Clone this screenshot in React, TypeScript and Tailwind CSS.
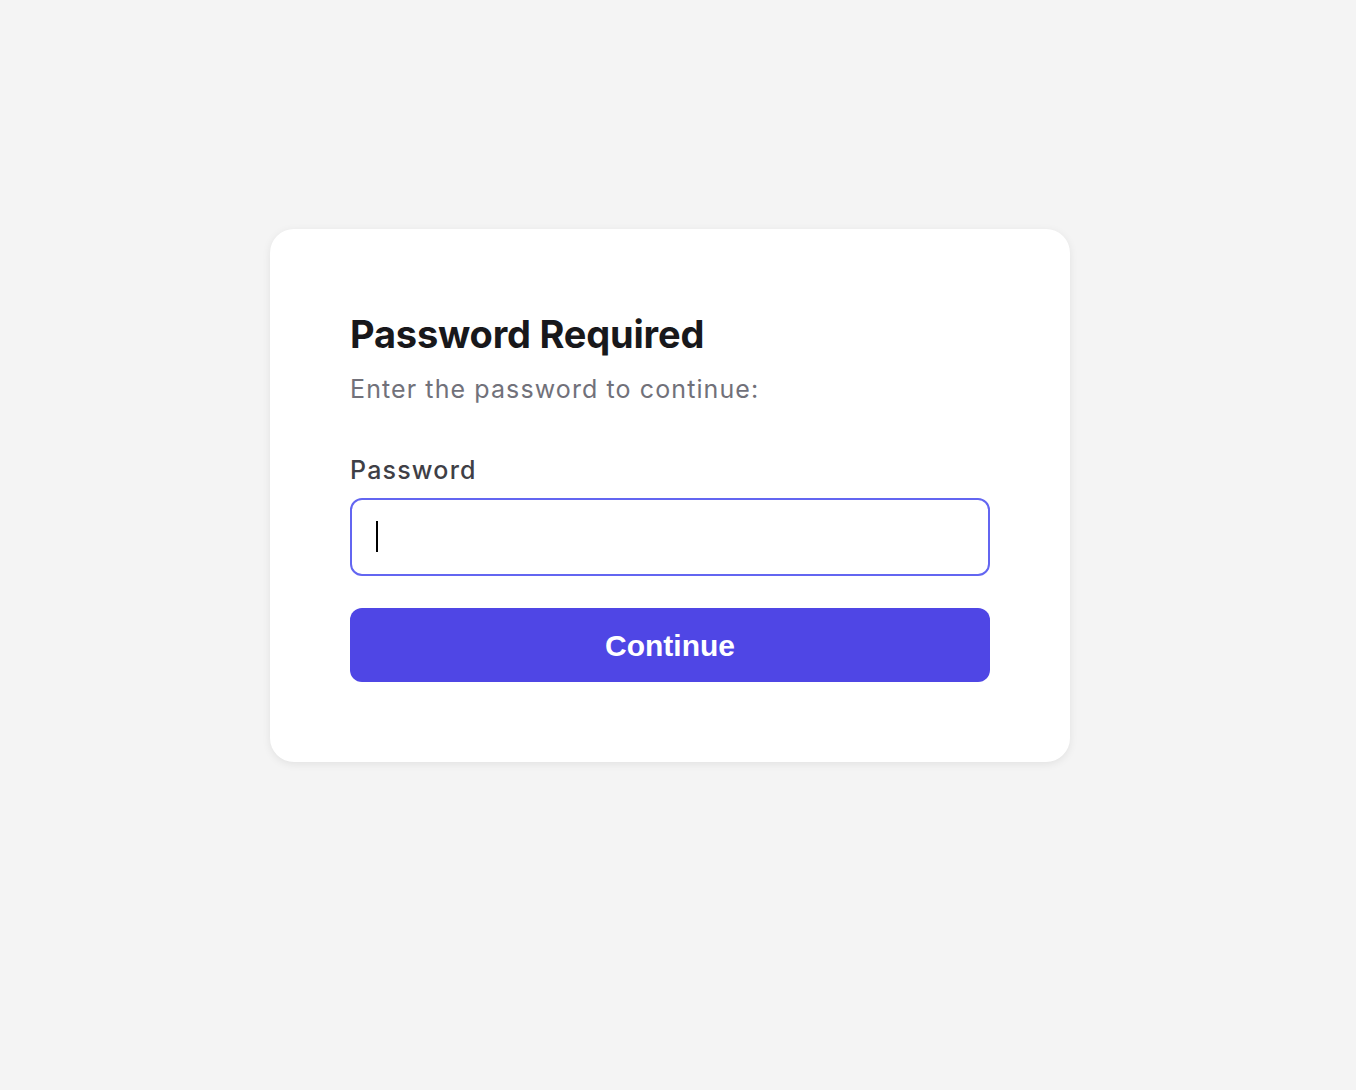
import { useEffect, useRef } from "react";

export default function App() {
  const inputRef = useRef<HTMLInputElement>(null);

  useEffect(() => {
    inputRef.current?.focus();
  }, []);

  return (
    <div
      className="flex min-h-[1090px] w-full items-start justify-center bg-[#f4f4f4] pr-4 pt-[229px]"
      style={{ fontFamily: "Inter, 'Noto Sans', sans-serif" }}
    >
      <div className="w-[800px] rounded-3xl bg-white p-20 shadow-[0_2px_8px_rgba(0,0,0,0.08)]">
        <h1 className="text-[38px] font-bold leading-[50px] tracking-[-0.2px] text-[#18181b]">
          Password Required
        </h1>
        <p className="mt-3 text-[25px] leading-[36px] tracking-[1.1px] text-[#71717a]">
          Enter the password to continue:
        </p>
        <form
          className="mt-[45px]"
          onSubmit={(e) => {
            e.preventDefault();
          }}
        >
          <label
            htmlFor="password"
            className="block text-[25px] font-medium leading-[36px] tracking-[1.2px] text-[#3f3f46]"
          >
            Password
          </label>
          <div className="relative mt-[10px]">
            <input
              ref={inputRef}
              id="password"
              type="password"
              className="block h-[78px] w-full rounded-xl border-2 border-[#6366f1] bg-white px-6 text-[24px] text-black caret-black outline-none"
            />
            {/* caret shown in the reference */}
            <span className="pointer-events-none absolute left-[26px] top-[23px] h-[31px] w-[2px] bg-black" />
          </div>
          <button
            type="submit"
            className="mt-8 flex h-[74px] w-full items-center justify-center rounded-xl bg-[#4f46e5] text-[30px] font-bold text-white"
            style={{ fontFamily: "'Liberation Sans', Arial, sans-serif" }}
          >
            Continue
          </button>
        </form>
      </div>
    </div>
  );
}
